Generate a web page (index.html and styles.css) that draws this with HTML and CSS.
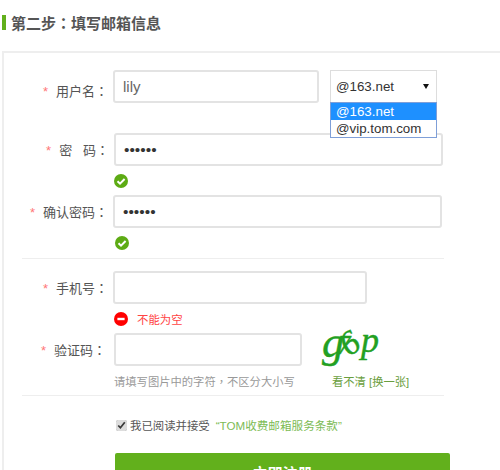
FILE: index.html
```html
<!DOCTYPE html>
<html lang="zh-CN">
<head>
    <meta charset="UTF-8">
    <title>填写邮箱信息</title>
    <link rel="stylesheet" href="styles.css">
</head>
<body>
    <h2 class="step-title">第二步<span class="colon" lang="zh-TW">：</span>填写邮箱信息</h2>

    <form class="card">
        <!-- Account -->
        <div class="row row-user">
            <label class="label"><span class="star">*</span>用户名<span class="colon" lang="zh-TW">：</span></label>
            <input class="field field-user" type="text" value="lily">
            <div class="domain">
                <div class="domain-current">
                    <span>@163.net</span>
                    <span class="arrow"></span>
                </div>
                <ul class="domain-list">
                    <li class="selected">@163.net</li>
                    <li>@vip.tom.com</li>
                </ul>
            </div>
        </div>

        <div class="row row-pass">
            <label class="label"><span class="star">*</span>密&nbsp;&nbsp;&nbsp;码<span class="colon" lang="zh-TW">：</span></label>
            <input class="field field-long field-secret" type="password" value="lily12">
        </div>
        <div class="tip tip-pass">
            <svg class="icon" viewBox="0 0 14 14"><circle cx="7" cy="7" r="7" fill="#5dab14"/><path d="M3.5 7.2 6 9.6 10.6 5" fill="none" stroke="#fff" stroke-width="2"/></svg>
        </div>

        <div class="row row-confirm">
            <label class="label"><span class="star">*</span>确认密码<span class="colon" lang="zh-TW">：</span></label>
            <input class="field field-long field-secret" type="password" value="lily12">
        </div>
        <div class="tip tip-confirm">
            <svg class="icon" viewBox="0 0 14 14"><circle cx="7" cy="7" r="7" fill="#5dab14"/><path d="M3.5 7.2 6 9.6 10.6 5" fill="none" stroke="#fff" stroke-width="2"/></svg>
        </div>

        <div class="divider divider-first"></div>

        <!-- Contact -->
        <div class="row row-phone">
            <label class="label"><span class="star">*</span>手机号<span class="colon" lang="zh-TW">：</span></label>
            <input class="field field-phone" type="text">
        </div>
        <div class="tip tip-error">
            <svg class="icon" viewBox="0 0 14 14"><circle cx="7" cy="7" r="7" fill="#f00"/><rect x="3.4" y="5.8" width="7.2" height="2.4" fill="#fff"/></svg>
            <span class="error-text">不能为空</span>
        </div>

        <div class="row row-code">
            <label class="label"><span class="star">*</span>验证码<span class="colon" lang="zh-TW">：</span></label>
            <input class="field field-code" type="text">
            <svg class="captcha" viewBox="0 0 60 33">
                <text class="captcha-text" y="24"><tspan x="0" font-size="44">g</tspan><tspan x="15" y="21" font-size="27">7</tspan><tspan x="27" y="24" font-size="34" rotate="-35">6</tspan><tspan x="39" y="19" font-size="36">p</tspan></text>
            </svg>
        </div>
        <div class="code-help">
            <span class="hint">请填写图片中的字符<span class="colon" lang="zh-TW">，</span>不区分大小写</span>
            <a class="swap">看不清 [换一张]</a>
        </div>

        <div class="divider divider-second"></div>

        <label class="agree">
            <input class="agree-box" type="checkbox" checked>
            <span>我已阅读并接受</span>
            <a class="terms">“TOM收费邮箱服务条款”</a>
        </label>

        <button class="submit" type="button">立即注册</button>
    </form>
</body>
</html>
```

FILE: styles.css
```css
body, html {
    margin: 0;
    padding: 0;
    height: 470px;
    overflow: hidden;
    background: #fff;
    font-family: "Liberation Sans", "Noto Sans CJK SC", sans-serif;
    color: #555;
}
.step-title {
    margin: 15px 0 21px 2px;
    padding-left: 5px;
    border-left: 4px solid #62b01c;
    height: 15px;
    line-height: 16px;
    font-size: 15px;
    font-weight: 700;
    color: #555;
}
/* Centred punctuation, like the original system font */
.colon {
    font-family: "Noto Sans CJK TC", sans-serif;
}
.card {
    margin-left: 2px;
    width: 520px;
    border-top: 2px solid #eee;
    border-left: 2px solid #eee;
    padding-top: 17px;
}
.row {
    display: flex;
    align-items: center;
    height: 33px;
}
.label {
    width: 109px;
    flex: none;
    box-sizing: border-box;
    padding-right: 5px;
    font-size: 13px;
    text-align: right;
    color: #555;
}
.row-user .label { padding-top: 8px; }
.row-code .label { padding-right: 8px; }
.star {
    margin-right: 8px;
    color: #f77;
    font-size: 13px;
}
.field {
    box-sizing: border-box;
    height: 33px;
    margin: 0;
    padding: 0 8px;
    border: 2px solid #e3e3e3;
    border-radius: 3px;
    outline: none;
    font-family: "Liberation Sans", sans-serif;
    font-size: 15px;
    color: #666;
}
.field-secret {
    font-size: 15.5px;
    color: #333;
}
.field-user { width: 206px; }
.field-long { width: 329px; }
.field-phone { width: 254px; }
.field-code { width: 188px; }
.row-pass, .row-code { padding-left: 1px; }
.row-pass { margin-top: 30px; }
.row-confirm { margin-top: 7px; }
.row-phone { margin-top: 12px; }
.row-code { margin-top: 7px; }

/* Open select, drawn by hand */
.domain {
    position: relative;
    width: 107px;
    margin-left: 11px;
    font-size: 13.33px;
    color: #333;
}
.domain-current {
    box-sizing: border-box;
    display: flex;
    align-items: center;
    justify-content: space-between;
    height: 33px;
    padding: 0 5px;
    border: 1px solid #ddd;
}
.arrow {
    border-left: 3px solid transparent;
    border-right: 3px solid transparent;
    border-top: 5px solid #111;
    margin-right: 2px;
}
.domain-list {
    position: absolute;
    top: 32px;
    left: 0;
    right: 0;
    margin: 0;
    padding: 0;
    list-style: none;
    background: #fff;
    border: 1px solid #7f9fd8;
}
.domain-list li {
    height: 17px;
    line-height: 17px;
    padding-left: 5px;
}
.domain-list .selected {
    background: #1e90ff;
    color: #fff;
}

.tip {
    display: flex;
    align-items: center;
    height: 14px;
    padding-left: 110px;
}
.tip-pass { margin-top: 8px; }
.tip-confirm { margin-top: 8px; padding-left: 111px; }
.tip-error { margin-top: 8px; }
.icon {
    width: 14px;
    height: 14px;
    flex: none;
}
.error-text {
    margin-left: 9px;
    font-size: 11.4px;
    color: #f44;
}
.divider {
    width: 422px;
    margin-left: 18px;
    border-top: 1px solid #eee;
}
.divider-first { margin-top: 8px; }
.divider-second { margin-top: 6px; }

.captcha {
    width: 60px;
    height: 33px;
    margin-left: 20px;
    overflow: visible;
}
.captcha-text {
    font-family: "Liberation Serif", serif;
    font-style: italic;
    fill: #22a022;
    stroke: #22a022;
    stroke-width: 0.4;
}

.code-help {
    display: flex;
    align-items: center;
    height: 16px;
    margin-top: 7px;
    padding-left: 110px;
    font-size: 11.3px;
    color: #999;
}
.hint { width: 218px; flex: none; }
.swap { color: #6a9e3e; }

.agree {
    display: flex;
    align-items: center;
    height: 16px;
    margin-top: 21px;
    padding-left: 112px;
    font-size: 11.4px;
    color: #555;
}
.agree-box {
    width: 11px;
    height: 11px;
    margin: 0 3px 0 0;
    accent-color: #ddd;
}
.terms {
    margin-left: 6px;
    font-size: 11.6px;
    color: #7cbb55;
}
.submit {
    display: block;
    width: 335px;
    height: 38px;
    margin: 20px 0 0 111px;
    border: none;
    border-radius: 2px;
    background: #62b01c;
    color: #fff;
    font-family: inherit;
    font-size: 15px;
    font-weight: 700;
}
```
